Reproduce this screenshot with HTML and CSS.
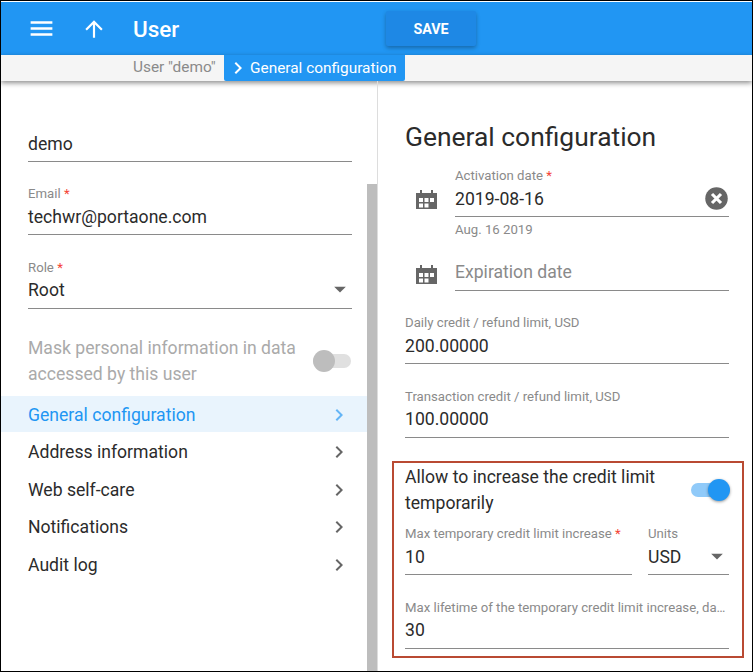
FILE: index.html
```html
<!DOCTYPE html>
<html lang="en">

<head>
    <meta charset="UTF-8">
    <title>User</title>
    <link rel="stylesheet" href="styles.css">
</head>

<body>
    <div class="screen">
        <header class="topbar">
            <svg class="icon-menu" viewBox="0 0 24 24"><path d="M3 18h18v-2H3v2zm0-5h18v-2H3v2zm0-7v2h18V6H3z" /></svg>
            <svg class="icon-up" viewBox="0 0 24 24"><path d="M4 12l1.41 1.41L11 7.83V20h2V7.83l5.58 5.59L20 12l-8-8-8 8z" /></svg>
            <h1 class="page-title">User</h1>
            <button class="save-btn">SAVE</button>
        </header>
        <nav class="crumbs">
            <span class="crumb-parent">User "demo"</span>
            <span class="crumb-current">
                <svg width="24" height="24" viewBox="0 0 24 24"><path d="M8.59 16.59L13.17 12 8.59 7.41 10 6l6 6-6 6z" /></svg>
                General configuration
            </span>
        </nav>
        <main class="columns">
            <section class="left">
                <div class="scrollthumb"></div>
                <div class="field field-first">
                    <div class="value">demo</div>
                </div>
                <div class="field">
                    <label>Email <i>*</i></label>
                    <div class="value">techwr@portaone.com</div>
                </div>
                <div class="field">
                    <label>Role <i>*</i></label>
                    <div class="value">Root
                        <svg class="caret" viewBox="0 0 24 24"><path d="M7 10l5 5 5-5z" /></svg>
                    </div>
                </div>
                <div class="switch-row mask">
                    <span>Mask personal information in data accessed by this user</span>
                    <span class="switch off"><b></b></span>
                </div>
                <ul class="menu">
                    <li class="active">General configuration <svg width="24" height="24" viewBox="0 0 24 24"><path d="M8.59 16.59L13.17 12 8.59 7.41 10 6l6 6-6 6z" /></svg></li>
                    <li>Address information <svg width="24" height="24" viewBox="0 0 24 24"><path d="M8.59 16.59L13.17 12 8.59 7.41 10 6l6 6-6 6z" /></svg></li>
                    <li>Web self-care <svg width="24" height="24" viewBox="0 0 24 24"><path d="M8.59 16.59L13.17 12 8.59 7.41 10 6l6 6-6 6z" /></svg></li>
                    <li>Notifications <svg width="24" height="24" viewBox="0 0 24 24"><path d="M8.59 16.59L13.17 12 8.59 7.41 10 6l6 6-6 6z" /></svg></li>
                    <li>Audit log <svg width="24" height="24" viewBox="0 0 24 24"><path d="M8.59 16.59L13.17 12 8.59 7.41 10 6l6 6-6 6z" /></svg></li>
                </ul>
            </section>
            <section class="right">
                <h2>General configuration</h2>
                <div class="date-row date-set">
                    <svg class="cal" viewBox="0 0 21 19"><path fill-rule="evenodd" d="M4 0h2v3h9V0h2v3h4v16H0V3h4zM3 8v4h4V8zm5.5 0v4h4V8zM14 8v4h4V8zM3 13.5v4h4v-4zm5.5 0v4h4v-4z" /></svg>
                    <div class="field">
                        <label>Activation date <i>*</i></label>
                        <div class="value">2019-08-16
                            <svg class="clear" viewBox="0 0 24 24"><circle cx="12" cy="12" r="10" /><path class="clear-x" d="M8 8l8 8M16 8l-8 8" /></svg>
                        </div>
                        <div class="hint">Aug. 16 2019</div>
                    </div>
                </div>
                <div class="date-row date-empty">
                    <svg class="cal" viewBox="0 0 21 19"><path fill-rule="evenodd" d="M4 0h2v3h9V0h2v3h4v16H0V3h4zM3 8v4h4V8zm5.5 0v4h4V8zM14 8v4h4V8zM3 13.5v4h4v-4zm5.5 0v4h4v-4z" /></svg>
                    <div class="field">
                        <div class="value placeholder">Expiration date</div>
                    </div>
                </div>
                <div class="field">
                    <label>Daily credit / refund limit, USD</label>
                    <div class="value">200.00000</div>
                </div>
                <div class="field">
                    <label>Transaction credit / refund limit, USD</label>
                    <div class="value">100.00000</div>
                </div>
                <div class="callout">
                    <div class="switch-row">
                        <span>Allow to increase the credit limit temporarily</span>
                        <span class="switch on"><b></b></span>
                    </div>
                    <div class="pair">
                        <div class="field">
                            <label>Max temporary credit limit increase <i>*</i></label>
                            <div class="value">10</div>
                        </div>
                        <div class="field units">
                            <label>Units</label>
                            <div class="value">USD
                                <svg class="caret" viewBox="0 0 24 24"><path d="M7 10l5 5 5-5z" /></svg>
                            </div>
                        </div>
                    </div>
                    <div class="field">
                        <label class="cut">Max lifetime of the temporary credit limit increase, days</label>
                        <div class="value">30</div>
                    </div>
                </div>
            </section>
        </main>
    </div>
</body>

</html>
```

FILE: styles.css
```css
* {
    box-sizing: border-box;
}

html,
body {
    margin: 0;
    padding: 0;
}

body {
    font-family: Roboto, sans-serif;
    background-color: #fff;
    color: #2b2b2b;
}

.screen {
    width: 753px;
    height: 672px;
    border: 1px solid #000;
    padding-top: 1px;
    overflow: hidden;
    display: flex;
    flex-direction: column;
}

/* Top bar */
.topbar {
    height: 53px;
    flex: none;
    background-color: #2196f3;
    display: flex;
    align-items: center;
    color: #fff;
    fill: #fff;
    padding-left: 25.5px;
}

.icon-menu {
    width: 29px;
    height: 29px;
}

.icon-up {
    width: 26px;
    height: 26px;
    margin-left: 25px;
}

.page-title {
    margin: 0 0 0 26.5px;
    font-size: 22.5px;
    font-weight: 500;
    width: 253px;
}

.save-btn {
    width: 90px;
    height: 35px;
    border: none;
    border-radius: 2px;
    background-color: #1e88e5;
    color: #fff;
    font-family: Roboto, sans-serif;
    font-size: 14.3px;
    font-weight: 700;
    box-shadow: 0 2px 4px rgba(0, 0, 0, 0.3);
}

/* Breadcrumbs */
.crumbs {
    height: 26px;
    flex: none;
    background-color: #f5f5f5;
    box-shadow: 0 2px 5px rgba(0, 0, 0, 0.45);
    display: flex;
    align-items: stretch;
    font-size: 15.4px;
    position: relative;
    padding-left: 132px;
}

.crumb-parent {
    color: #8a8a8a;
    width: 91px;
    line-height: 25px;
}

.crumb-current {
    background-color: #2196f3;
    color: #fff;
    fill: #fff;
    width: 181px;
    display: flex;
    align-items: center;
    gap: 0.5px;
    padding-left: 1.5px;
    border-radius: 0 0 2px 2px;
}

/* Columns */
.columns {
    flex: 1;
    display: flex;
    min-height: 0;
}

.left {
    width: 377px;
    flex: none;
    border-right: 1px solid #ddd;
    position: relative;
    padding-top: 35px;
}

.scrollthumb {
    position: absolute;
    right: 0;
    top: 103px;
    bottom: 0;
    width: 10px;
    background-color: #bdbdbd;
}

.right {
    flex: 1;
    padding: 0 23px 0 27px;
    min-width: 0;
}

h2 {
    margin: 0 0 15px;
    font-size: 26.4px;
    font-weight: 400;
    line-height: 30px;
    padding-top: 41px;
}

/* Form fields */
.field {
    height: 50px;
    margin-bottom: 23.5px;
    position: relative;
}

.left .field {
    margin-left: 27px;
    margin-right: 25px;
}

.left .field-first {
    height: 46px;
    padding-top: 14px;
    margin-bottom: 23px;
}

label {
    display: block;
    font-size: 13.2px;
    line-height: 18px;
    height: 18px;
    color: #8a8a8a;
    white-space: nowrap;
}

label i {
    color: #f44336;
    font-style: normal;
}

.cut {
    overflow: hidden;
    text-overflow: ellipsis;
}

.value {
    font-size: 17.6px;
    line-height: 24px;
    height: 32px;
    padding-top: 1.5px;
    border-bottom: 1px solid #8a8a8a;
    position: relative;
}

.placeholder {
    height: 33px;
    padding-top: 2px;
    color: #8a8a8a;
}

.caret {
    position: absolute;
    right: -1.5px;
    top: -1.5px;
    width: 28px;
    height: 28px;
    fill: #666;
}

.hint {
    font-size: 13.2px;
    color: #8a8a8a;
    margin-top: 5px;
}

/* Date rows */
.date-row {
    display: flex;
    padding-left: 11px;
    gap: 18px;
}

.date-row .field {
    flex: 1;
    margin: 0;
}

.cal {
    flex: none;
    width: 21px;
    height: 19px;
    fill: #666;
}

.date-set .cal {
    margin-top: 23px;
}

.date-set .field {
    height: 71px;
}

.date-empty {
    margin-top: 20px;
    margin-bottom: 23px;
}

.date-empty .field {
    height: 33px;
}

.date-empty .cal {
    margin-top: 7px;
}

.clear {
    position: absolute;
    right: -1px;
    top: 0;
    width: 27px;
    height: 27px;
    fill: #666;
}

.clear-x {
    fill: none;
    stroke: #fff;
    stroke-width: 2.8;
}

/* Switches */
.switch-row {
    display: flex;
    align-items: center;
    justify-content: space-between;
    font-size: 17.6px;
    line-height: 26px;
}

.switch-row span:first-child {
    width: 272px;
}

.switch {
    width: 38px;
    height: 14px;
    border-radius: 7px;
    position: relative;
    flex: none;
}

.switch b {
    position: absolute;
    top: -4px;
    width: 22px;
    height: 22px;
    border-radius: 50%;
}

.switch.on {
    background-color: #90caf9;
}

.switch.on b {
    right: -1px;
    background-color: #2196f3;
    box-shadow: 0 1px 3px rgba(0, 0, 0, 0.4);
}

.switch.off {
    background-color: #e0e0e0;
}

.switch.off b {
    left: 0;
    background-color: #bdbdbd;
}

.mask {
    margin: 26.5px 26px 9px 27px;
    color: #aaa;
}

/* Left menu */
.menu {
    list-style: none;
    margin: 0;
    padding: 0;
    font-size: 17.6px;
}

.menu li {
    height: 36px;
    margin-bottom: 1.5px;
    display: flex;
    align-items: center;
    justify-content: space-between;
    padding: 1px 16px 0 27px;
    width: 366px;
    fill: #666;
}

.menu li.active {
    background-color: #e9f4fd;
    color: #2196f3;
    fill: #64b5f6;
}

/* Red callout */
.callout {
    border: 2px solid #b94a32;
    margin: 0 -15px 0 -13px;
    padding: 1px 13px 0 11px;
    height: 197px;
}

.pair {
    display: flex;
    gap: 16px;
    margin-top: 9px;
}

.pair .field {
    flex: 1;
    min-width: 0;
}

.pair .units {
    flex: none;
    width: 81px;
}
```
